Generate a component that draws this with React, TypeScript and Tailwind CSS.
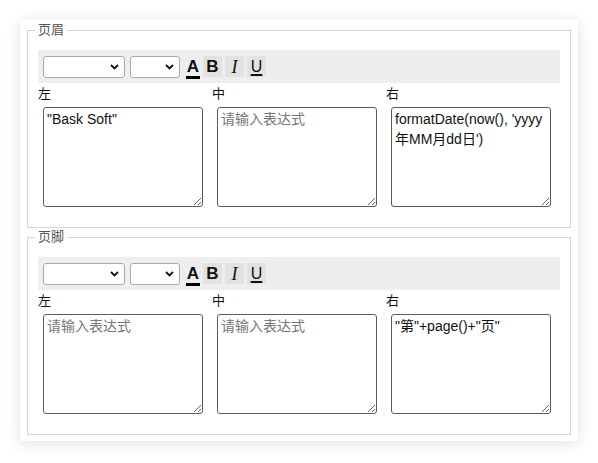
import type { ReactNode } from 'react';

const FONT = '"Liberation Sans", "Noto Sans CJK SC", sans-serif';

type Cell = { value?: string };

function Chevron() {
  return (
    <svg width="9" height="6" viewBox="0 0 9 6" className="absolute right-[6px] top-[8px]">
      <path d="M1 1l3.5 3.5L8 1" fill="none" stroke="#111" strokeWidth="1.8" />
    </svg>
  );
}

function FakeSelect({ width }: { width: string }) {
  return (
    <div className={`relative h-[22px] ${width}`}>
      <select className="h-full w-full appearance-none rounded-[3px] border border-[#a9a9a9] bg-white outline-none" />
      <Chevron />
    </div>
  );
}

function ToolButton({ children, plain }: { children: ReactNode; plain?: boolean }) {
  return (
    <button
      type="button"
      className={`flex h-[21px] items-center justify-center text-[17px] leading-none text-[#111] ${
        plain ? 'w-[14px]' : 'w-[19px] bg-[#e2e2e2]'
      }`}
    >
      {children}
    </button>
  );
}

function Toolbar() {
  return (
    <div className="flex h-[33px] items-center bg-[#eeeeee] pl-[5px]">
      <FakeSelect width="w-[82px]" />
      <div className="w-[5px]" />
      <FakeSelect width="w-[50px]" />
      <div className="ml-[6px] flex items-center gap-[3px]">
        <ToolButton plain>
          <span className="flex flex-col items-center font-semibold">
            <span className="mt-[3px]">A</span>
            <span className="mt-[1px] block h-[3px] w-[14px] bg-black" />
          </span>
        </ToolButton>
        <ToolButton>
          <span className="font-bold">B</span>
        </ToolButton>
        <ToolButton>
          <span className="font-['Liberation_Serif',serif] text-[18px] italic">I</span>
        </ToolButton>
        <ToolButton>
          <span className="text-[16px] underline decoration-[1.5px] underline-offset-[2px]">U</span>
        </ToolButton>
      </div>
    </div>
  );
}

function Section({ title, cells }: { title: string; cells: Cell[] }) {
  const labels = ['左', '中', '右'];
  return (
    <fieldset className="border border-[#d6d6d6] px-[10px] pb-[20px] pt-[11px]">
      <legend className="-ml-[3px] px-[3px] text-[13px] leading-[18px] text-[#555]">{title}</legend>
      <Toolbar />
      <div className="mt-[2px] grid grid-cols-3">
        {cells.map((cell, i) => (
          <div key={labels[i]}>
            <div className="text-[13px] leading-[18px] text-[#111]">{labels[i]}</div>
            <textarea
              defaultValue={cell.value}
              placeholder="请输入表达式"
              className="mt-[4px] ml-[5px] block h-[100px] w-[160px] rounded-[3px] border border-[#5c5c5c] px-[3px] py-[1px] text-[14px] leading-[20px] text-[#111] outline-none placeholder:text-[#777]"
              style={{ fontFamily: FONT }}
            />
          </div>
        ))}
      </div>
    </fieldset>
  );
}

export default function App() {
  return (
    <div className="h-[463px] w-[598px] bg-white pt-[20px] pl-[20px]" style={{ fontFamily: FONT }}>
      <div className="w-[558px] bg-white px-[7px] pt-[1px] pb-[6px] shadow-[0_2px_14px_rgba(0,0,0,0.13)]">
        <Section
          title="页眉"
          cells={[{ value: '"Bask Soft"' }, {}, { value: "formatDate(now(), 'yyyy年MM月dd日')" }]}
        />
        <Section title="页脚" cells={[{}, {}, { value: '"第"+page()+"页"' }]} />
      </div>
    </div>
  );
}
